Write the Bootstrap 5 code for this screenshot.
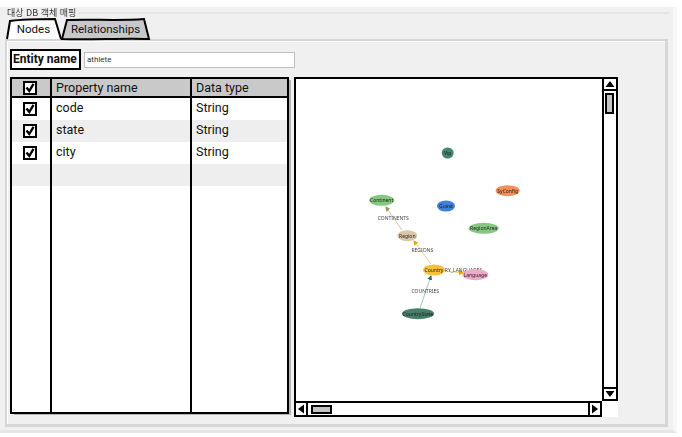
<!DOCTYPE html>
<html lang="ko">
<head>
<meta charset="utf-8">
<title>Mapping</title>
<link href="https://cdn.jsdelivr.net/npm/bootstrap@5.3.0/dist/css/bootstrap.min.css" rel="stylesheet">
<style>
html,body{background:#fff;margin:0;overflow:hidden}
body{font-family:Roboto,"Noto Sans","Noto Sans CJK KR",sans-serif;font-size:12px;color:#111;width:682px;height:437px}
.shell{margin-top:7px;width:677px;height:426px;background:#f0f0f0;padding:5px 9px 5px 5px;position:relative}
.group-edge{position:absolute;left:0;right:0;top:0;bottom:0;pointer-events:none;border-right:4px solid #f7f7f7;border-bottom:3px solid #e6e6e6}
.group-title{position:absolute;left:5px;top:0;padding:0 2px;background:#f0f0f0;font-size:9px;line-height:12px;color:#333;filter:blur(.25px);font-family:"Noto Sans CJK KR",sans-serif}
.group-line{position:absolute;left:75px;right:8px;top:5px;height:2px;background:#e4e4e4}
.tabbar{height:28px;padding-top:6px;position:relative;z-index:2;gap:0}
.tabbar .nav-item{position:relative}
.sk{position:absolute;left:0;top:0;z-index:0;overflow:visible}
.tabbar .nav-link{position:relative;z-index:1;padding:1px 0 0;color:#111;font-size:11.5px;line-height:20px;text-align:center;background:none;border:0}
.tab-a{width:55px;height:22px;margin-left:1px}
.tab-b{width:89px;height:22px}
.pane{height:388px;margin-top:-1px;border:2px solid #d6d6d6;border-right-width:3px;border-bottom-width:3px;box-shadow:inset 1px 1px 0 #fff;padding:8px 3px 0 3px;width:663px}
.ename{width:71px;height:21px;background:#fff;border:2px solid #000;font-weight:700;font-size:12px;line-height:16px;padding-left:1px;white-space:nowrap}
.einput.form-control{width:211px;height:16px;min-height:0;padding:0 2px;font-size:8px;line-height:14px;border:1px solid #bdbdbd;border-radius:0;color:#333;margin-left:3px;box-shadow:none}
.work{margin-top:7px;gap:5px}
.gridbox{width:279px;height:337px;background:#fff;border:2px solid #000;position:relative;box-shadow:3px 2px 0 -1px #b5b5b5}
.grow{display:grid;grid-template-columns:40px 140px 1fr;height:22px;line-height:20px;font-size:12.5px}
.grow>div{border-right:2px solid #000;padding-left:4px;height:100%}
.grow>div:first-child{padding:0 2px 0 0;display:flex;align-items:center;justify-content:center}
.grow>div:last-child{border-right:0}
.ghead{background:#c9c9c9;height:17px;border-bottom:2px solid #000;box-sizing:content-box;line-height:17px}
.galt{background:#eeeeee}
.grow.gfill{height:226px}
.viewer{width:324px;height:340px;background:#fff;display:grid;grid-template-columns:308px 16px;grid-template-rows:324px 16px}
.canvas{border:2px solid #000;border-right:0;border-bottom:0;overflow:hidden;filter:blur(.45px)}
.vbar{border:2px solid #000;border-bottom:0;border-top:0;display:flex;flex-direction:column;height:324px;width:16px}
.btnv{height:14px;flex:none;border-top:2px solid #000;border-bottom:2px solid #000;display:flex;align-items:center;justify-content:center;background:#fff;margin:0 -2px;border-left:2px solid #000;border-right:2px solid #000}
.vtrack{flex:1;padding:2px 1px}
.vthumb{width:9px;height:21px;background:#c4c4c4;border:2px solid #000}
.hbar{display:flex;height:16px;width:308px;border:2px solid #000;border-left:0;border-right:0;align-items:center;margin-top:0}
.btnh{width:14px;height:16px;flex:none;border:2px solid #000;display:flex;align-items:center;justify-content:center;background:#fff}
.htrack{flex:1;padding-left:3px;display:flex;align-items:center}
.hthumb{width:21px;height:9px;background:#c4c4c4;border:2px solid #000}
.gnode{font-size:5px;fill:#222;text-anchor:middle;dominant-baseline:central;font-family:"Noto Sans",sans-serif}
.gedge{font-size:5px;fill:#444;text-anchor:middle;dominant-baseline:central;font-family:"Noto Sans",sans-serif}
</style>
</head>
<body>
<svg width="0" height="0" class="d-block position-absolute"><defs>
<symbol id="chk" viewBox="0 0 14 14"><rect x="1" y="1" width="12" height="12" fill="#fff" stroke="#000" stroke-width="2"/><path d="M3.500 6.500 6.300 10 10.500 2.800" fill="none" stroke="#000" stroke-width="2.400"/></symbol>
</defs></svg>
<div class="shell">
  <div class="group-edge"></div>
  <div class="group-line"></div>
  <div class="group-title">대상 DB 객체 매핑</div>
  <ul class="nav tabbar flex-nowrap">
    <li class="nav-item tab-a">
      <svg class="sk" width="55" height="22"><path d="M1 21 4 3C18 1 35 1 49 1L55 21" fill="#fff" stroke="#000" stroke-width="2"/></svg>
      <a class="nav-link" href="#">Nodes</a>
    </li>
    <li class="nav-item tab-b">
      <svg class="sk" width="89" height="22"><path d="M1 21 6 2C30 1 60 3 83 1L88 21C60 20 30 22 1 21Z" fill="#c8c8c8" stroke="#000" stroke-width="2"/></svg>
      <a class="nav-link" href="#">Relationships</a>
    </li>
  </ul>
  <div class="pane">
    <div class="d-flex align-items-center">
      <div class="ename">Entity name</div>
      <input class="form-control einput" type="text" value="athlete">
    </div>
    <div class="d-flex work align-items-start">
      <div class="gridbox">
        <div class="grow ghead"><div><svg width="14" height="14"><use href="#chk"/></svg></div><div>Property name</div><div>Data type</div></div>
        <div class="grow"><div><svg width="14" height="14"><use href="#chk"/></svg></div><div>code</div><div>String</div></div>
        <div class="grow galt"><div><svg width="14" height="14"><use href="#chk"/></svg></div><div>state</div><div>String</div></div>
        <div class="grow"><div><svg width="14" height="14"><use href="#chk"/></svg></div><div>city</div><div>String</div></div>
        <div class="grow galt"><div></div><div></div><div></div></div>
        <div class="grow gfill"><div></div><div></div><div></div></div>
      </div>
      <div class="viewer">
        <div class="canvas">
          <svg width="306" height="322" viewBox="296 79 306 322">
            <defs>
              <marker id="ma" markerWidth="5" markerHeight="5" refX="4" refY="2.500" orient="auto"><path d="M0 0 5 2.500 0 5Z" fill="#e0a800"/></marker>
              <marker id="mb" markerWidth="5" markerHeight="5" refX="4" refY="2.500" orient="auto"><path d="M0 0 5 2.500 0 5Z" fill="#a98e63"/></marker>
              <marker id="mc" markerWidth="5" markerHeight="5" refX="4" refY="2.500" orient="auto"><path d="M0 0 5 2.500 0 5Z" fill="#2f6f5c"/></marker>
            </defs>
            <path d="M402 230 386 207" stroke="#d8c6a8" fill="none" marker-end="url(#mb)"/>
            <path d="M431 264 414 241" stroke="#f4d58a" fill="none" marker-end="url(#ma)"/>
            <path d="M420 308 431 276" stroke="#a8c6bb" fill="none" marker-end="url(#mc)"/>
            <path d="M445 271 463 273" stroke="#f4d58a" fill="none" marker-end="url(#ma)"/>
            <ellipse cx="447.7" cy="153" rx="6" ry="5.500" fill="#46856f"/>
            <ellipse cx="507.7" cy="190.7" rx="12" ry="5.500" fill="#f58d58"/>
            <ellipse cx="381.7" cy="200.3" rx="12.500" ry="5.500" fill="#84c97f"/>
            <ellipse cx="446" cy="206" rx="9" ry="5.500" fill="#3f80d8"/>
            <ellipse cx="483.7" cy="228.3" rx="15" ry="5.500" fill="#84c97f"/>
            <ellipse cx="407.3" cy="235.7" rx="10" ry="5.500" fill="#d9c7a9"/>
            <text class="gedge" x="463.500" y="269.500">RY_LANGUAGES</text>
            <ellipse cx="434" cy="270" rx="11" ry="5.500" fill="#fac03c"/>
            <ellipse cx="475.3" cy="274.7" rx="13" ry="5.500" fill="#efaac7"/>
            <ellipse cx="418" cy="313.7" rx="16" ry="5.500" fill="#44806a"/>
            <text class="gnode" x="447.7" y="153">Vip</text>
            <text class="gnode" x="507.7" y="190.7">SyConfig</text>
            <text class="gnode" x="381.7" y="200.3">Continent</text>
            <text class="gnode" x="446" y="206">Guest</text>
            <text class="gnode" x="483.7" y="228.3">RegionArea</text>
            <text class="gnode" x="407.3" y="235.7">Region</text>
            <text class="gnode" x="434" y="270">Country</text>
            <text class="gnode" x="475.3" y="274.7">Language</text>
            <text class="gnode" x="418" y="313.7">CountryState</text>
            <text class="gedge" x="393.3" y="218.3">CONTINENTS</text>
            <text class="gedge" x="422.3" y="250.3">REGIONS</text>
            <text class="gedge" x="425.3" y="291.3">COUNTRIES</text>
          </svg>
        </div>
        <div class="vbar">
          <div class="btnv"><svg width="10" height="8"><path d="M5 1 9.500 7H.5Z"/></svg></div>
          <div class="vtrack"><div class="vthumb"></div></div>
          <div class="btnv"><svg width="10" height="8"><path d="M5 7 9.500 1H.5Z"/></svg></div>
        </div>
        <div class="hbar">
          <div class="btnh"><svg width="8" height="10"><path d="M1 5 7 .5V9.500Z"/></svg></div>
          <div class="htrack"><div class="hthumb"></div></div>
          <div class="btnh"><svg width="8" height="10"><path d="M7 5 1 .5V9.500Z"/></svg></div>
        </div>
        <div></div>
      </div>
    </div>
  </div>
</div>
</body>
</html>
